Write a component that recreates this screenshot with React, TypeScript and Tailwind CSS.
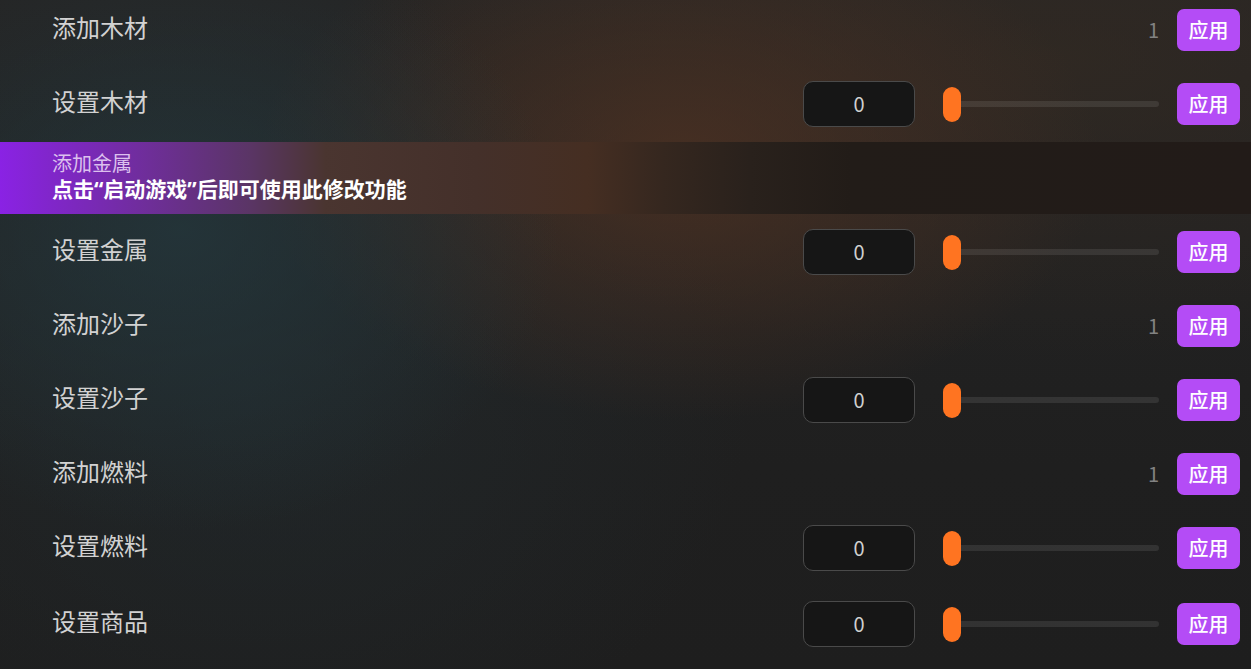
import React from "react";

type Row =
  | { kind: "add"; label: string }
  | { kind: "set"; label: string }
  | { kind: "locked"; label: string; hint: string };

const rows: Row[] = [
  { kind: "add", label: "添加木材" },
  { kind: "set", label: "设置木材" },
  { kind: "locked", label: "添加金属", hint: "点击“启动游戏”后即可使用此修改功能" },
  { kind: "set", label: "设置金属" },
  { kind: "add", label: "添加沙子" },
  { kind: "set", label: "设置沙子" },
  { kind: "add", label: "添加燃料" },
  { kind: "set", label: "设置燃料" },
  { kind: "set", label: "设置商品" },
];

const font = { fontFamily: '"Noto Sans CJK SC", "Noto Sans", sans-serif' };
const hintFont = { fontFamily: '"Noto Sans", "Noto Sans CJK SC", sans-serif' };

function ApplyButton() {
  return (
    <button className="w-[63px] h-[42px] rounded-[7px] bg-[#b44cf6] text-white text-[20px] font-medium leading-none flex items-center justify-center shrink-0">
      应用
    </button>
  );
}

function Slider() {
  return (
    <div className="relative w-[216px] h-[35px] flex items-center">
      <div className="w-full h-[6px] rounded-full bg-white/[0.09]" />
      <div className="absolute left-0 top-0 w-[18px] h-[35px] rounded-full bg-[#ff7421]" />
    </div>
  );
}

export default function App() {
  return (
    <div
      style={font}
      className="w-full h-[669px] overflow-hidden bg-[#1e1e1e] bg-[radial-gradient(ellipse_380px_300px_at_180px_230px,rgba(36,56,62,0.75),transparent),radial-gradient(ellipse_420px_260px_at_680px_160px,rgba(80,50,34,0.75),transparent),radial-gradient(ellipse_700px_300px_at_1050px_60px,rgba(52,42,34,0.7),transparent),radial-gradient(ellipse_500px_400px_at_250px_400px,rgba(34,44,48,0.6),transparent),linear-gradient(180deg,#252525_0%,#1f1f1f_70%,#1e1e1e_100%)]"
    >
      <div className="-mt-[7px] flex flex-col">
        {rows.map((r, i) => {
          const last = i === rows.length - 1;
          if (r.kind === "locked") {
            return (
              <div key={i} className="h-[74px] py-px">
                <div className="h-[72px] pl-[52px] pr-[11px] flex items-center bg-[linear-gradient(90deg,#8a22e4_0%,#6e2e98_12%,#5a3565_20%,#4a3530_26%,#44302a_38%,#452e22_47%,#35271f_53%,#29211c_60%,#221c18_68%,#221b18_100%)]">
                  <div className="flex flex-col pb-[4px]">
                    <span className="text-[20px] leading-[27px] text-[#dcc0ee]">{r.label}</span>
                    <span style={hintFont} className="text-[21px] leading-[27px] font-bold text-white">
                      {r.hint}
                    </span>
                  </div>
                  <div className="ml-auto w-[63px] flex items-center justify-center text-[20px] text-white/[0.015]">
                    应用
                  </div>
                </div>
              </div>
            );
          }
          return (
            <div key={i} className={`h-[74px] pl-[52px] pr-[11px] flex items-center ${last ? "mt-[2px]" : ""}`}>
              <span className="text-[24px] text-[#d2d2d2] leading-none pb-[6px]">{r.label}</span>
              <div className="ml-auto flex items-center">
                {r.kind === "add" ? (
                  <span className="text-[20px] text-[#828282] mr-[18px]">1</span>
                ) : (
                  <>
                    <div className="w-[112px] h-[46px] rounded-[10px] border-[1.5px] border-[#4a4a4a] bg-[#161616] flex items-center justify-center text-[20px] text-[#d0d0d0]">
                      0
                    </div>
                    <div className="ml-[28px] mr-[18px]">
                      <Slider />
                    </div>
                  </>
                )}
                <ApplyButton />
              </div>
            </div>
          );
        })}
      </div>
    </div>
  );
}
